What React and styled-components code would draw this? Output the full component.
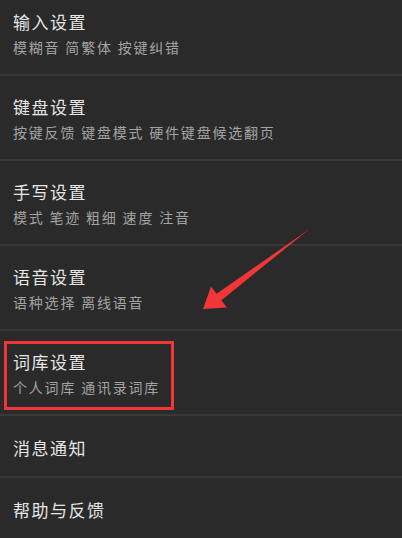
import React from "react";
import styled, { createGlobalStyle } from "styled-components";

const GlobalStyle = createGlobalStyle`
  html, body {
    margin: 0;
    padding: 0;
    background: #2a2a2a;
  }
  body {
    font-family: "Noto Sans CJK SC", "Noto Sans", sans-serif;
    overflow: hidden;
  }
`;

const Page = styled.div`
  position: relative;
  width: 402px;
  height: 538px;
  overflow: hidden;
  background: #2a2a2a;
`;

const List = styled.div`
  display: flex;
  flex-direction: column;
  margin-top: -9px;
`;

const Row = styled.div`
  position: relative;
  display: flex;
  flex-direction: column;
  gap: 4px;
  padding: ${(p) => (p.$single ? "21px 13px 17px" : "20px 13px 17px")};
  border-bottom: 2px solid #393939;
`;

const Title = styled.div`
  font-size: 17px;
  line-height: 22px;
  letter-spacing: 1.5px;
  color: #e6e6e6;
`;

const Sub = styled.div`
  font-size: 14px;
  line-height: 20px;
  letter-spacing: 1.8px;
  color: #a3a3a3;
`;

const Highlight = styled.div`
  position: absolute;
  left: 4px;
  top: 10px;
  width: 170px;
  height: 69px;
  box-sizing: border-box;
  border: 3px solid #f03636;
  pointer-events: none;
`;

const Arrow = styled.svg`
  position: absolute;
  left: 198px;
  top: 224px;
  width: 116px;
  height: 90px;
  pointer-events: none;
`;

const items = [
  { title: "输入设置", sub: "模糊音 简繁体 按键纠错" },
  { title: "键盘设置", sub: "按键反馈 键盘模式 硬件键盘候选翻页" },
  { title: "手写设置", sub: "模式 笔迹 粗细 速度 注音" },
  { title: "语音设置", sub: "语种选择 离线语音" },
  { title: "词库设置", sub: "个人词库 通讯录词库", marked: true },
  { title: "消息通知" },
  { title: "帮助与反馈" },
];

export default function App() {
  return (
    <Page>
      <GlobalStyle />
      <List>
        {items.map((it) => (
          <Row key={it.title} $single={!it.sub}>
            <Title>{it.title}</Title>
            {it.sub && <Sub>{it.sub}</Sub>}
            {it.marked && <Highlight />}
          </Row>
        ))}
      </List>
      <Arrow viewBox="198 224 116 90">
        <polygon
          points="203,309 211,286.6 216.6,293.8 309.5,229 221.4,300.2 226.8,307.4"
          fill="#f03636"
        />
      </Arrow>
    </Page>
  );
}
